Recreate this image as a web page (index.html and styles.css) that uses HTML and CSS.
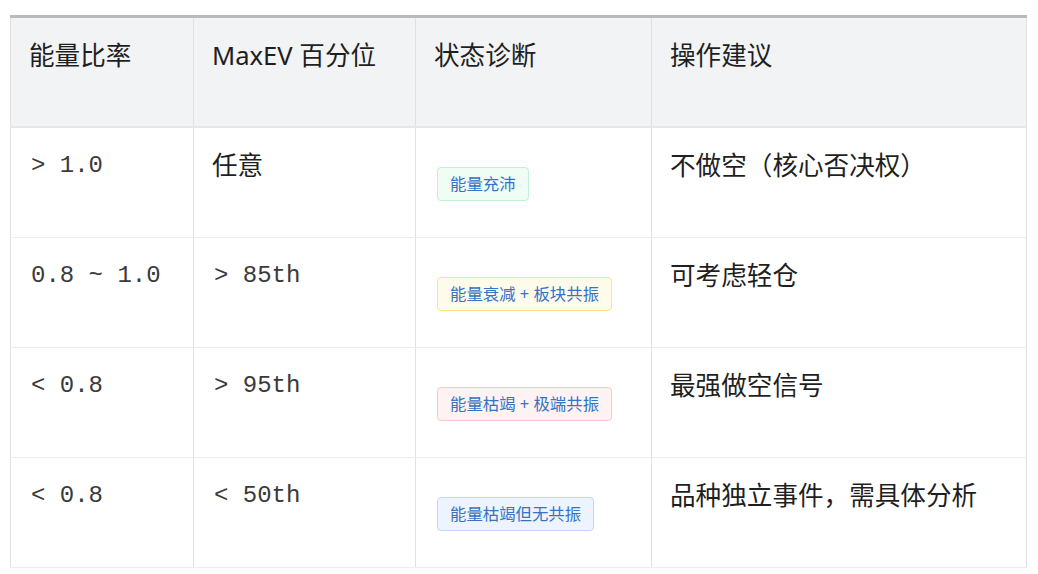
FILE: index.html
```html
<!DOCTYPE html>
<html lang="zh-CN">
<head>
<meta charset="utf-8">
<title>能量比率</title>
<link rel="stylesheet" href="styles.css">
</head>
<body>
<div class="wrap">
<table class="grid">
  <colgroup>
    <col class="c1"><col class="c2"><col class="c3"><col class="c4">
  </colgroup>
  <thead>
    <tr><th>能量比率</th><th>MaxEV 百分位</th><th>状态诊断</th><th>操作建议</th></tr>
  </thead>
  <tbody>
    <tr>
      <td class="mono">&gt; 1.0</td>
      <td>任意</td>
      <td class="tagcell"><span class="tag green">能量充沛</span></td>
      <td>不做空（核心否决权）</td>
    </tr>
    <tr>
      <td class="mono">0.8 ~ 1.0</td>
      <td class="mono">&gt; 85th</td>
      <td class="tagcell"><span class="tag yellow">能量衰减 + 板块共振</span></td>
      <td>可考虑轻仓</td>
    </tr>
    <tr>
      <td class="mono">&lt; 0.8</td>
      <td class="mono">&gt; 95th</td>
      <td class="tagcell"><span class="tag red">能量枯竭 + 极端共振</span></td>
      <td>最强做空信号</td>
    </tr>
    <tr>
      <td class="mono">&lt; 0.8</td>
      <td class="mono">&lt; 50th</td>
      <td class="tagcell"><span class="tag blue">能量枯竭但无共振</span></td>
      <td>品种独立事件，需具体分析</td>
    </tr>
  </tbody>
</table>
</div>
</body>
</html>
```

FILE: styles.css
```css
html, body {
  margin: 0;
  padding: 0;
  background: #ffffff;
}
.wrap {
  padding: 15px 12px 0 10px;
}
.grid {
  width: 1016px;
  border-collapse: collapse;
  table-layout: fixed;
  font-family: "Noto Sans", "Noto Sans CJK SC", sans-serif;
  font-size: 25.6px;
  color: #1f1f1f;
  border-top: 3px solid #bababa;
}
.c1 { width: 183px; }
.c2 { width: 222px; }
.c3 { width: 236px; }
.c4 { width: 375px; }
.grid th,
.grid td {
  text-align: left;
  vertical-align: top;
  padding: 20px 18px 0 18px;
  line-height: 35px;
  border-left: 1px solid #e0e0e0;
  border-right: 1px solid #e0e0e0;
  height: 89px;
}
.grid th {
  font-weight: 400;
  background: #f2f3f5;
  padding-top: 20px;
  height: 88px;
  border-bottom: 2px solid #e6e7ea;
}
.grid td {
  border-bottom: 1px solid #ececec;
}
.grid td.mono {
  font-family: "Liberation Mono", "DejaVu Sans Mono", monospace;
  font-size: 24px;
  color: #3a3a3a;
  padding-left: 20px;
}
.grid td.tagcell {
  vertical-align: middle;
  padding-top: 0;
  padding-bottom: 2px;
  padding-left: 21px;
}
.tag {
  display: inline-block;
  font-size: 16.4px;
  line-height: 24px;
  padding: 4px 12px;
  border: 1px solid;
  border-radius: 4px;
  color: #3573c4;
}
.green { background: #effdf4; border-color: #bdf3d0; }
.yellow { background: #fefbea; border-color: #fde38a; }
.red { background: #fef2f2; border-color: #fcc9c9; }
.blue { background: #eef4ff; border-color: #c3d5fd; }
```
